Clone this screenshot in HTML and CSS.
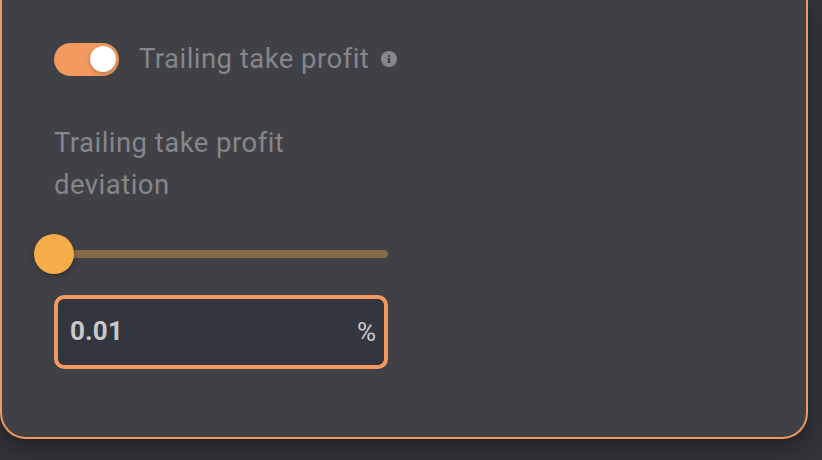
FILE: index.html
```html
<!DOCTYPE html>
<html lang="en">
<head>
<meta charset="utf-8">
<title>Take profit</title>
<link rel="stylesheet" href="styles.css">
</head>
<body>
<section class="card">
  <div class="toggle-row">
    <span class="switch"><span class="knob"></span></span>
    <span class="toggle-label">Trailing take profit</span>
    <svg class="info" viewBox="0 0 16 16"><circle cx="8" cy="8" r="8" fill="#86878a"/><path d="M7 4h2v2H7zM6.4 7H9v4h.7v1H6.3v-1H7V8h-.6z" fill="#404146"/></svg>
  </div>
  <div class="field">
    <div class="label">Trailing take profit deviation</div>
    <div class="slider"><span class="thumb"></span></div>
    <div class="input"><span class="value">0.01</span><span class="unit">%</span></div>
  </div>
</section>
</body>
</html>
```
FILE: styles.css
```css
* { box-sizing: border-box; }
body { margin: 0; height: 460px; overflow: hidden; background: #33343a; font-family: Roboto, sans-serif; color: #858689; }
.card { width: 808px; height: 439px; padding: 38px 52px 0; border: 2px solid #f1995e; border-top: 0; border-radius: 0 0 26px 26px; background: #404146; box-shadow: 0 8px 24px rgba(0,0,0,.4); }
.toggle-row { display: flex; align-items: center; height: 42px; }
.switch { display: flex; align-items: center; justify-content: flex-end; width: 65px; height: 33px; padding: 0 3px 1px; border-radius: 17px; background: #f1995e; }
.knob { width: 26px; height: 26px; border-radius: 50%; background: #fff; box-shadow: 0 2px 4px rgba(0,0,0,.2); }
.toggle-label { width: 230px; margin-left: 20px; padding-bottom: 1px; font-size: 27.5px; letter-spacing: .46px; white-space: nowrap; }
.info { width: 16px; height: 16px; margin-left: 12px; }
.field { width: 334px; margin-top: 42px; }
.label { width: 260px; font-size: 27.5px; line-height: 42px; letter-spacing: .46px; }
.slider { display: flex; align-items: center; height: 8px; margin-top: 44px; border-radius: 4px; background: #856a47; }
.thumb { flex: none; width: 40px; height: 40px; margin-left: -20px; border-radius: 50%; background: #f4ad49; box-shadow: 0 2px 6px rgba(0,0,0,.3); }
.input { display: flex; align-items: center; justify-content: space-between; height: 74px; margin-top: 37px; padding: 0 8px 0 12px; border: 4px solid #f1995e; border-radius: 10px; background: #33363f; color: #c8c8cb; font-size: 26px; }
.value { padding-bottom: 2px; font-weight: 700; letter-spacing: .2px; }
```
